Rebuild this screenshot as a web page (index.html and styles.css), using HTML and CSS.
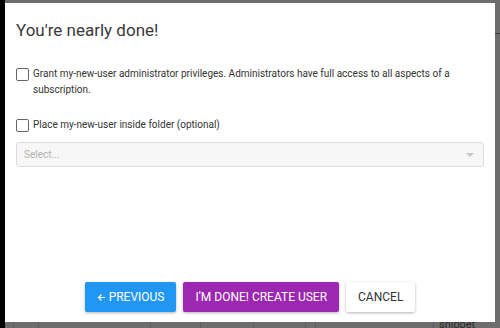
FILE: index.html
```html
<!DOCTYPE html>
<html lang="en">
<head>
  <meta charset="UTF-8" />
  <meta name="viewport" content="width=device-width, initial-scale=1.0"/>
  <title>Create User</title>
  <link rel="stylesheet" href="styles.css">
</head>
<body>
  <!-- Page behind the dialog -->
  <div class="page">
    <div class="sidebar"></div>
    <div class="main">
      <div class="topbar"></div>
      <div class="table-row">
        <div class="cell w8"></div>
        <div class="cell w25"></div>
        <div class="cell w112"></div>
        <div class="cell w50"></div>
        <div class="cell w53"></div>
        <div class="cell w52"></div>
        <div class="cell w10"></div>
        <div class="cell w118"></div>
        <div class="cell snippet">snippet</div>
      </div>
    </div>
  </div>

  <!-- Dialog -->
  <div class="modal">
    <h2>You're nearly done!</h2>

    <label class="check-row first">
      <span class="box"></span>
      <span>Grant my-new-user administrator privileges. Administrators have full access to all aspects of a subscription.</span>
    </label>

    <label class="check-row">
      <span class="box"></span>
      <span>Place my-new-user inside folder (optional)</span>
    </label>

    <div class="select">
      <span>Select...</span>
      <span class="caret"></span>
    </div>

    <div class="btn-container">
      <button class="btn btn-blue">
        <svg width="9" height="9" viewBox="0 0 9 9"><path d="M8 4.5H1.5M4.5 1.5L1.5 4.5L4.5 7.5" fill="none" stroke="#fff" stroke-width="1.2"/></svg>
        PREVIOUS
      </button>
      <button class="btn btn-purple">I'M DONE! CREATE USER</button>
      <button class="btn btn-white">CANCEL</button>
    </div>
  </div>
</body>
</html>
```

FILE: styles.css
```css
body {
  margin: 0;
  font-family: Roboto, "Liberation Sans", Arial, sans-serif;
  background-color: #6d6d6d;
  overflow: hidden;
}

.page {
  display: flex;
  height: 328px;
}

.sidebar {
  width: 5px;
  background: #000;
}

.main {
  flex: 1;
  display: flex;
  flex-direction: column;
}

.topbar {
  height: 33px;
  border-bottom: 1px solid #3c3c3c;
}

.table-row {
  margin-top: auto;
  height: 6px;
  display: flex;
}

.cell {
  border-right: 1px solid #5c5c5c;
}

.w8 { width: 8px; }
.w25 { width: 24px; }
.w112 { width: 111px; }
.w50 { width: 49px; }
.w53 { width: 52px; }
.w52 { width: 51px; }
.w10 { width: 9px; }
.w118 { width: 117px; }

.snippet {
  border: none;
  padding-left: 5px;
  font-size: 11px;
  line-height: 6px;
  color: #2a2a2a;
}

.modal {
  position: fixed;
  left: 5px;
  top: 3px;
  width: 490px;
  height: 319px;
  box-sizing: border-box;
  background: #fff;
  padding: 17px 11px 10px;
  display: flex;
  flex-direction: column;
  color: #333;
}

h2 {
  margin: 0;
  font-size: 17px;
  font-weight: normal;
  line-height: 20px;
  color: #3a3a3a;
}

.check-row {
  display: flex;
  align-items: flex-start;
  gap: 4px;
  font-size: 10px;
  line-height: 16px;
  color: #333;
  cursor: pointer;
}

.check-row.first {
  margin-top: 26px;
  margin-bottom: 19px;
}

.box {
  flex: none;
  width: 11px;
  height: 11px;
  margin-top: 2px;
  border: 1px solid #666;
  border-radius: 2px;
}

.select {
  margin-top: 9px;
  height: 25px;
  box-sizing: border-box;
  display: flex;
  align-items: center;
  justify-content: space-between;
  padding: 0 9px 0 7px;
  background: #f7f7f7;
  border: 1px solid #dcdcdc;
  border-radius: 3px;
  font-size: 10px;
  color: #b0b0b0;
}

.caret {
  width: 0;
  height: 0;
  border-left: 4px solid transparent;
  border-right: 4px solid transparent;
  border-top: 4px solid #c8c8c8;
}

.btn-container {
  margin-top: auto;
  display: flex;
  justify-content: center;
  gap: 7px;
}

.btn {
  height: 30px;
  border: none;
  border-radius: 2px;
  font-family: Roboto, "Liberation Sans", Arial, sans-serif;
  font-size: 12px;
  padding: 0 12px;
  cursor: pointer;
  box-shadow: 0 1px 3px rgba(0, 0, 0, 0.3);
  display: flex;
  align-items: center;
  gap: 3px;
}

.btn-blue {
  background-color: #2196f3;
  color: #fff;
}

.btn-purple {
  background-color: #9c27b0;
  color: #fff;
}

.btn-white {
  background-color: #fff;
  color: #333;
}
```
